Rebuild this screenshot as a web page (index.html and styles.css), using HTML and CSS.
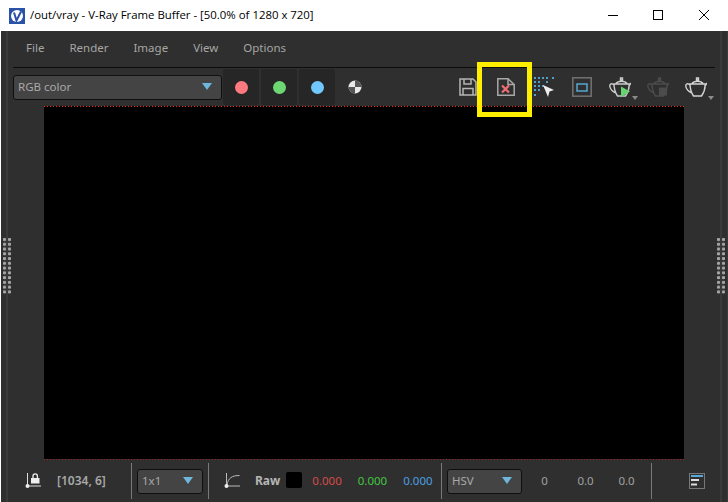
FILE: index.html
```html
<!DOCTYPE html>
<html lang="en">
<head>
<meta charset="utf-8">
<title>V-Ray Frame Buffer</title>
<link rel="stylesheet" href="styles.css">
</head>
<body>
<div class="window">
  <header class="titlebar">
    <svg class="app-icon" width="16" height="16" viewBox="0 0 16 16"><rect width="16" height="16" fill="#2a53a8"/><circle cx="8" cy="8" r="6" fill="#fff"/><path d="M5 4.500L7.500 12.500L12 3.500" stroke="#2a53a8" stroke-width="2" fill="none"/></svg>
    <span class="title">/out/vray - V-Ray Frame Buffer - [50.0% of 1280 x 720]</span>
    <div class="caption">
      <svg width="46" height="31" viewBox="0 0 46 31"><path d="M19 15.500H29" stroke="#000" stroke-width="1"/></svg>
      <svg width="46" height="31" viewBox="0 0 46 31"><rect x="18.500" y="10.500" width="9" height="9" fill="none" stroke="#000"/></svg>
      <svg width="46" height="31" viewBox="0 0 46 31"><path d="M18 10L28 20M28 10L18 20" stroke="#000" fill="none"/></svg>
    </div>
  </header>
  <div class="body">
    <nav class="menu">
      <span>File</span><span>Render</span><span>Image</span><span>View</span><span>Options</span>
    </nav>
    <div class="toolbar">
      <div class="select select-main"><span>RGB color</span><i class="arrow"></i></div>
      <div class="chan"><b class="dot red"></b></div>
      <div class="chan"><b class="dot green"></b></div>
      <div class="chan"><b class="dot blue"></b></div>
      <div class="chan plain">
        <svg width="14" height="14" viewBox="0 0 14 14"><circle cx="7" cy="7" r="6.500" fill="#e8e8e8"/><path d="M7 .5A6.500 6.500 0 0 1 13.500 7H7zM7 7V13.500A6.500 6.500 0 0 1 .5 7z" fill="#555"/></svg>
      </div>
      <div class="tools">
        <svg class="tool" width="18" height="18" viewBox="0 0 18 18" fill="none" stroke="#b5b5b5" stroke-width="1.500"><path d="M1 1H14L17 4V17H1z"/><path d="M5 1V6H12V1M4 17V10.500H14V17"/></svg>
        <svg class="tool tool-clear" width="18" height="18" viewBox="0 0 18 18" fill="none"><path d="M.8.8H11L17.200 6.500V17.200H.8z" stroke="#a8a8a8" stroke-width="1.500"/><path d="M11 .8V6.500H17.200" stroke="#a8a8a8" stroke-width="1.500"/><path d="M5 7.500L12 14.500M12 7.500L5 14.500" stroke="#ee6f75" stroke-width="2.200"/></svg>
        <svg class="tool tool-region" width="20" height="20" viewBox="0 0 20 20"><g fill="#4f9fc9"><rect x="0" y="0" width="2" height="2"/><rect x="4" y="0" width="2" height="2"/><rect x="8" y="0" width="2" height="2"/><rect x="12" y="0" width="2" height="2"/><rect x="18" y="0" width="2" height="2"/><rect x="0" y="4" width="2" height="2"/><rect x="4" y="4" width="2" height="2"/><rect x="12" y="4" width="2" height="2"/><rect x="0" y="8" width="2" height="2"/><rect x="4" y="8" width="2" height="2"/><rect x="8" y="8" width="2" height="2"/><rect x="0" y="12" width="2" height="2"/><rect x="4" y="12" width="2" height="2"/><rect x="0" y="17" width="2" height="2"/></g><path d="M9 8L20 13L15.500 14.500L14 20z" fill="#eee"/></svg>
        <svg class="tool tool-track" width="20" height="20" viewBox="0 0 20 20" fill="none"><rect x=".8" y=".8" width="18.400" height="18.400" stroke="#6e6e6e" stroke-width="1.600"/><rect x="5" y="7" width="10" height="7" stroke="#5aa7d2" stroke-width="1.500"/></svg>
        <div class="pot pot-first">
          <svg width="22" height="20" viewBox="0 0 22 20" fill="none" stroke="#ccc" stroke-width="1.400"><path d="M11.500 1h2v2h-2zM7 6.500C9 3.500 16 3.500 18 6.500M5 7H20C20.500 11 18.500 16 16.500 19H8.500C6.500 16 5 12 5 7zM5 8C2.500 5.500 .8 7 .8 9C.8 12 4 15 7 16M20 9L22 6"/><path d="M12 9.500L21 14.500L12 20z" fill="#66d571" stroke="none"/></svg>
          <i class="mini"></i>
        </div>
        <div class="pot">
          <svg width="22" height="20" viewBox="0 0 22 20" fill="none" stroke="#4c4c4c" stroke-width="1.400"><path d="M11.500 1h2v2h-2zM7 6.500C9 3.500 16 3.500 18 6.500M5 7H20C20.500 11 18.500 16 16.500 19H8.500C6.500 16 5 12 5 7zM5 8C2.500 5.500 .8 7 .8 9C.8 12 4 15 7 16M20 9L22 6"/><rect x="12" y="10.500" width="8" height="8" fill="#4c4c4c" stroke="none"/></svg>
        </div>
        <div class="pot">
          <svg width="22" height="20" viewBox="0 0 22 20" fill="none" stroke="#d4d4d4" stroke-width="1.400"><path d="M11.500 1h2v2h-2zM7 6.500C9 3.500 16 3.500 18 6.500M5 7H20C20.500 11 18.500 16 16.500 19H8.500C6.500 16 5 12 5 7zM5 8C2.500 5.500 .8 7 .8 9C.8 12 4 15 7 16M20 9L22 6"/></svg>
          <i class="mini"></i>
        </div>
      </div>
    </div>
    <div class="stage">
      <div class="side side-left"><div class="grip"></div></div>
      <div class="canvas"></div>
      <div class="side side-right"><div class="grip"></div></div>
    </div>
    <footer class="status">
      <div class="cell cell-coord">
        <svg width="16" height="16" viewBox="0 0 16 16" fill="none"><path d="M2.500 0V13M1 13H16" stroke="#ddd"/><circle cx="2.500" cy="13" r="2" fill="#eee"/><rect x="6" y="5" width="8.500" height="5.500" fill="#eee"/><path d="M8 5V3a2.200 2.200 0 0 1 4.400 0V5" stroke="#eee" stroke-width="1.300"/></svg>
        <strong class="coords">[1034, 6]</strong>
      </div>
      <div class="cell cell-size"><div class="select select-size"><span>1x1</span><i class="arrow"></i></div></div>
      <div class="cell cell-color">
        <svg width="16" height="16" viewBox="0 0 16 16" fill="none"><path d="M2.500 0V13M2.500 13H16" stroke="#bbb"/><path d="M3 12C4 5 8 2.500 15.500 2.500" stroke="#bbb"/><circle cx="2.500" cy="13" r="2" fill="#eee"/></svg>
        <strong class="raw">Raw</strong>
        <i class="swatch"></i>
        <span class="val v-r">0.000</span>
        <span class="val v-g">0.000</span>
        <span class="val v-b">0.000</span>
      </div>
      <div class="cell cell-hsv">
        <div class="select select-hsv"><span>HSV</span><i class="arrow"></i></div>
        <span class="n n1">0</span><span class="n">0.0</span><span class="n">0.0</span>
      </div>
      <div class="cell cell-end">
        <svg width="16" height="16" viewBox="0 0 16 16" fill="none"><rect x=".5" y=".5" width="15" height="15" stroke="#777"/><path d="M2 3H14" stroke="#59a9da" stroke-width="2"/><path d="M2 7H10" stroke="#ddd" stroke-width="2"/><path d="M2 11.500H8" stroke="#ddd" stroke-width="2"/></svg>
      </div>
    </footer>
  </div>
  <div class="highlight"></div>
</div>
</body>
</html>
```

FILE: styles.css
```css
* { box-sizing: border-box; }
html, body { margin: 0; padding: 0; }
body { width: 728px; height: 502px; overflow: hidden; background: #fff; font-family: "Noto Sans", "Open Sans", sans-serif; }
.window { position: relative; width: 728px; height: 502px; display: flex; flex-direction: column; }
.titlebar { height: 31px; flex: none; background: #fff; display: flex; align-items: center; padding-left: 9px; }
.app-icon { flex: none; }
.title { margin-left: 5px; padding-bottom: 2px; font-family: "Open Sans", "Liberation Sans", sans-serif; font-size: 11.400px; color: #000; white-space: nowrap; }
.caption { margin-left: auto; margin-right: 1px; display: flex; }
.caption svg { display: block; }
.body { flex: 1; margin-left: 1px; display: flex; flex-direction: column; min-height: 0; border-right: 1px solid #3a3a3a;
  background:
    linear-gradient(#3a3a3a, #3a3a3a) 5px 0 / 2px 100% no-repeat,
    linear-gradient(#3a3a3a, #3a3a3a) 719px 0 / 2px 100% no-repeat,
    #2f2f2f; }
.menu { height: 37px; flex: none; margin: 0 12px; display: flex; align-items: center; padding: 0 0 4px 13px; gap: 25px; font-size: 11.500px; color: #a6a6a6; border-bottom: 1px solid #0c0c0c; }
.toolbar { height: 38px; flex: none; display: flex; align-items: center; padding-left: 12px; padding-right: 20px; }
.select { display: flex; align-items: center; justify-content: space-between; background: #444; border: 1px solid #0f0f0f; border-radius: 3px; color: #a9a9a9; font-size: 11.500px; height: 25px; padding: 0 9px 2px 4px; }
.select-main { width: 209px; margin-right: 1px; }
.arrow { width: 0; height: 0; border-left: 5.500px solid transparent; border-right: 5.500px solid transparent; border-top: 7px solid #6fb6dc; }
.chan { width: 36px; height: 36px; margin-right: 2px; background: #262626; border-radius: 3px; display: flex; align-items: center; justify-content: center; }
.chan.plain { background: none; }
.dot { width: 13px; height: 13px; border-radius: 50%; }
.red { background: #ff7a80; }
.green { background: #6dd873; }
.blue { background: #70c8ff; }
.tools { margin-left: auto; display: flex; align-items: center; }
.tool { display: block; flex: none; }
.tool-clear { margin-left: 20px; }
.tool-region { margin-left: 19px; }
.tool-track { margin-left: 18px; }
.pot { position: relative; margin-left: 16px; width: 22px; height: 20px; }
.pot-first { margin-left: 17px; }
.pot svg { display: block; }
.mini { position: absolute; right: -7px; bottom: -3px; width: 0; height: 0; border-left: 3.500px solid transparent; border-right: 3.500px solid transparent; border-top: 4px solid #8b8b8b; }
.stage { flex: 1; min-height: 0; display: flex; align-items: stretch; }
.side { flex: none; width: 43px; padding-top: 132px; }
.side-left { padding-left: 2px; }
.side-right { padding-left: 33px; }
.canvas { width: 640px; flex: none;
  background:
    repeating-linear-gradient(90deg, #ff2020 0 1px, #000 1px 3px) top / 100% 1px no-repeat,
    repeating-linear-gradient(90deg, #a02020 0 1px, #2f2f2f 1px 3px) bottom / 100% 1px no-repeat,
    #000; }
.grip { width: 8px; height: 57px; background: radial-gradient(circle at 1.500px 1.500px, #a5a5a5 1.300px, transparent 2px) 0 0 / 5px 4.770px; }
.status { height: 42px; flex: none; display: flex; align-items: center; color: #a0a0a0; font-size: 11.500px; }
.cell { height: 36px; display: flex; align-items: center; flex: none; }
.cell + .cell { border-left: 1px solid #7a7a7a; }
.cell-coord { width: 130px; padding-left: 24px; }
.coords { margin-left: 16px; padding-bottom: 2px; color: #a8a8a8; font-weight: 600; font-size: 12px; }
.cell-size { width: 77px; padding-left: 5px; }
.select-size { width: 66px; }
.cell-color { width: 233px; padding-left: 15px; }
.raw { margin-left: 15px; padding-bottom: 2px; color: #b5b5b5; font-weight: 700; font-size: 12px; }
.swatch { width: 16px; height: 16px; margin: 0 0 2px 6px; background: #000; border-radius: 2px; }
.val { margin-left: 10px; padding-bottom: 2px; }
.v-r { color: #d34a4a; }
.v-g { color: #43c643; margin-left: 16px; }
.v-b { color: #4a9ee0; margin-left: 16px; }
.cell-hsv { width: 210px; padding-left: 5px; }
.select-hsv { width: 75px; }
.n { color: #a0a0a0; width: 41px; padding-bottom: 2px; text-align: center; }
.n1 { margin-left: 2px; }
.cell-end { padding-left: 37px; width: 77px; }
.cell-end svg { display: block; }
.highlight { position: absolute; left: 477px; top: 62px; width: 55px; height: 55px; border: 5px solid #ffee00; pointer-events: none; }
```
